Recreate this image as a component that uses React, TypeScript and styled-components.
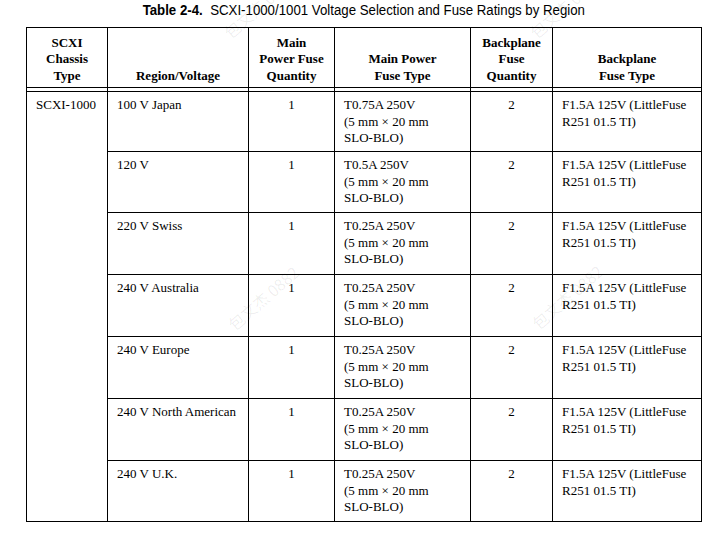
import React from "react";
import styled, { createGlobalStyle } from "styled-components";

const GlobalStyle = createGlobalStyle`
  html, body {
    margin: 0;
    padding: 0;
    background: #fff;
  }
  body {
    font-family: "Liberation Serif", "Times New Roman", serif;
    color: #000;
  }
`;

type Row = {
  region: string;
  mainFuse: string;
  height: number;
};

const rows: Row[] = [
  { region: "100 V Japan", mainFuse: "T0.75A 250V", height: 60 },
  { region: "120 V", mainFuse: "T0.5A 250V", height: 61 },
  { region: "220 V Swiss", mainFuse: "T0.25A 250V", height: 62 },
  { region: "240 V Australia", mainFuse: "T0.25A 250V", height: 62 },
  { region: "240 V Europe", mainFuse: "T0.25A 250V", height: 62 },
  { region: "240 V North American", mainFuse: "T0.25A 250V", height: 62 },
  { region: "240 V U.K.", mainFuse: "T0.25A 250V", height: 61 },
];

const columns = [81, 141, 86, 136, 82, 149];

// faint diagonal watermark stamps over the page
const marks = [
  { x: 259, y: 6 },
  { x: 565, y: 6 },
  { x: 263, y: 298 },
  { x: 567, y: 297 },
  { x: -43, y: 298 },
];

const App = () => {
  return (
    <Page>
      <GlobalStyle />
      <Caption>
        <CaptionText>
          <b>Table 2-4.</b> SCXI-1000/1001 Voltage Selection and Fuse Ratings by Region
        </CaptionText>
      </Caption>
      <Table>
        <colgroup>
          {columns.map((w, i) => (
            <Col key={i} $w={w} />
          ))}
        </colgroup>
        <thead>
          <HeadRow>
            <HeadCell>SCXI<br />Chassis<br />Type</HeadCell>
            <HeadCell>Region/Voltage</HeadCell>
            <HeadCell>Main<br />Power Fuse<br />Quantity</HeadCell>
            <HeadCell>Main Power<br />Fuse Type</HeadCell>
            <HeadCell>Backplane<br />Fuse<br />Quantity</HeadCell>
            <HeadCell>Backplane<br />Fuse Type</HeadCell>
          </HeadRow>
          <GapRow>
            {columns.map((_, i) => (
              <GapCell key={i} />
            ))}
          </GapRow>
        </thead>
        <tbody>
          {rows.map((row, i) => (
            <BodyRow key={row.region} $h={row.height}>
              {i === 0 && <Cell rowSpan={rows.length}>SCXI-1000</Cell>}
              <Cell>{row.region}</Cell>
              <Cell $center>1</Cell>
              <Cell>
                {row.mainFuse}
                <br />
                (5 mm × 20 mm
                <br />
                SLO-BLO)
              </Cell>
              <Cell $center>2</Cell>
              <Cell>
                F1.5A 125V (LittleFuse
                <br />
                R251 01.5 TI)
              </Cell>
            </BodyRow>
          ))}
        </tbody>
      </Table>
      {marks.map((m, i) => (
        <Watermark key={i} $x={m.x} $y={m.y}>
          包文杰 0882
        </Watermark>
      ))}
    </Page>
  );
};

const Page = styled.div`
  position: relative;
  width: 727px;
  height: 535px;
  overflow: hidden;
  background: #fff;
`;

const Caption = styled.h2`
  margin: 2px 0 0;
  font-family: "Liberation Sans", Arial, sans-serif;
  font-size: 14px;
  line-height: 17px;
  font-weight: normal;
  text-align: center;
`;

const CaptionText = styled.span`
  display: inline-block;
  white-space: pre;
  transform: scaleX(0.946);
  transform-origin: center;

  b {
    font-weight: bold;
    margin-right: 4px;
  }
`;

const Table = styled.table`
  margin: 8px 0 0 26px;
  width: 676px;
  table-layout: fixed;
  border-collapse: separate;
  border-spacing: 0;
  border-top: 1px solid #000;
  border-left: 1px solid #000;
  font-size: 13px;
  line-height: 16.5px;
`;

const Col = styled.col<{ $w: number }>`
  width: ${(p) => p.$w}px;
`;

const HeadRow = styled.tr`
  height: 60px;
`;

const HeadCell = styled.th`
  border-right: 1px solid #000;
  border-bottom: 1px solid #000;
  padding: 0 4px 3px;
  vertical-align: bottom;
  text-align: center;
  font-weight: bold;
`;

const GapRow = styled.tr`
  height: 4px;
`;

const GapCell = styled.td`
  border-right: 1px solid #000;
  border-bottom: 1px solid #000;
  padding: 0;
  height: 3px;
  font-size: 0;
  line-height: 0;
`;

const BodyRow = styled.tr<{ $h: number }>`
  height: ${(p) => p.$h}px;
`;

const Cell = styled.td<{ $center?: boolean }>`
  border-right: 1px solid #000;
  border-bottom: 1px solid #000;
  padding: 5px 9px 0;
  vertical-align: top;
  text-align: ${(p) => (p.$center ? "center" : "left")};
`;

const Watermark = styled.span<{ $x: number; $y: number }>`
  position: absolute;
  left: ${(p) => p.$x}px;
  top: ${(p) => p.$y}px;
  transform: translate(-50%, -50%) rotate(-41deg);
  font-family: "Noto Sans CJK SC", "Noto Sans", sans-serif;
  font-size: 16px;
  color: rgba(0, 0, 0, 0.07);
  white-space: nowrap;
  pointer-events: none;
`;

export default App;
